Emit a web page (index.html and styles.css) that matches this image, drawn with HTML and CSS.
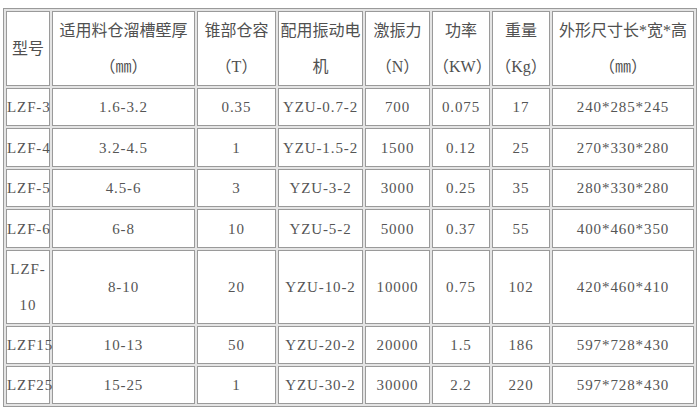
FILE: index.html
```html
<!DOCTYPE html>
<html lang="zh-CN">
<head>
<meta charset="utf-8">
<title>LZF 仓壁振动器参数</title>
<link rel="stylesheet" href="styles.css">
</head>
<body>
<table class="spec">
  <tr class="r-head">
    <th class="c1">型号</th>
    <th class="c2">适用料仓溜槽壁厚<br>（㎜）</th>
    <th class="c3">锥部仓容<br>（T）</th>
    <th class="c4">配用振动电<br>机</th>
    <th class="c5">激振力<br>（N）</th>
    <th class="c6">功率<br>（KW）</th>
    <th class="c7">重量<br>（Kg）</th>
    <th class="c8">外形尺寸长*宽*高<br>（㎜）</th>
  </tr>
  <tr class="r-a">
    <td>LZF-3</td><td>1.6-3.2</td><td>0.35</td><td>YZU-0.7-2</td><td>700</td><td>0.075</td><td>17</td><td>240*285*245</td>
  </tr>
  <tr class="r-b">
    <td>LZF-4</td><td>3.2-4.5</td><td>1</td><td>YZU-1.5-2</td><td>1500</td><td>0.12</td><td>25</td><td>270*330*280</td>
  </tr>
  <tr class="r-a">
    <td>LZF-5</td><td>4.5-6</td><td>3</td><td>YZU-3-2</td><td>3000</td><td>0.25</td><td>35</td><td>280*330*280</td>
  </tr>
  <tr class="r-b">
    <td>LZF-6</td><td>6-8</td><td>10</td><td>YZU-5-2</td><td>5000</td><td>0.37</td><td>55</td><td>400*460*350</td>
  </tr>
  <tr class="r-tall">
    <td>LZF-<br>10</td><td>8-10</td><td>20</td><td>YZU-10-2</td><td>10000</td><td>0.75</td><td>102</td><td>420*460*410</td>
  </tr>
  <tr class="r-a">
    <td>LZF15</td><td>10-13</td><td>50</td><td>YZU-20-2</td><td>20000</td><td>1.5</td><td>186</td><td>597*728*430</td>
  </tr>
  <tr class="r-a">
    <td>LZF25</td><td>15-25</td><td>1</td><td>YZU-30-2</td><td>30000</td><td>2.2</td><td>220</td><td>597*728*430</td>
  </tr>
</table>
</body>
</html>
```

FILE: styles.css
```css
html, body {
  margin: 0;
  padding: 0;
  background: #ffffff;
}

body {
  padding: 8px 0 0 3px;
  font-family: "Liberation Serif", "Noto Sans CJK SC", serif;
  font-size: 15px;
  color: #555555;
}

.spec {
  table-layout: fixed;
  width: 694px;
  border-collapse: separate;
  border-spacing: 2px;
  border: 1px solid #9a9a9a;
  background: #e4e4e4;
}

.spec th,
.spec td {
  box-sizing: border-box;
  padding: 0;
  border: 1px solid #9a9a9a;
  background: #ffffff;
  text-align: center;
  vertical-align: middle;
  white-space: nowrap;
}

.spec th {
  font-weight: normal;
  font-size: 16px;
  line-height: 36px;
  color: #505050;
}

.spec td {
  line-height: 36px;
  letter-spacing: 0.9px;
}

.c1 { width: 44px; }
.c2 { width: 143px; }
.c3 { width: 79px; }
.c4 { width: 85px; }
.c5 { width: 65px; }
.c6 { width: 58px; }
.c7 { width: 58px; }
.c8 { width: 142px; }

.r-head th { height: 75px; }
.r-a td { height: 38px; }
.r-b td { height: 39px; }
.r-tall td { height: 74px; }
```
